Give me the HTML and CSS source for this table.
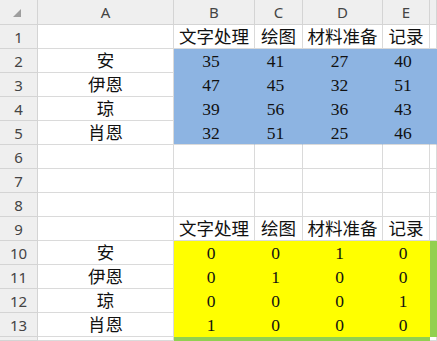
FILE: index.html
```html
<!DOCTYPE html>
<html>
<head>
<meta charset="utf-8">
<link rel="stylesheet" href="styles.css">
</head>
<body>
<div class="sheet">
  <div class="hd corner"><span class="tri"></span></div>
  <div class="hd col">A</div><div class="hd col">B</div><div class="hd col">C</div><div class="hd col">D</div><div class="hd col">E</div><div class="hd col"></div>

  <div class="hd row">1</div>
  <div class="c"></div><div class="c t">文字处理</div><div class="c t">绘图</div><div class="c t">材料准备</div><div class="c t">记录</div><div class="c"></div>

  <div class="hd row">2</div>
  <div class="c t">安</div><div class="c n blue">35</div><div class="c n blue">41</div><div class="c n blue">27</div><div class="c n blue">40</div><div class="c blue"></div>
  <div class="hd row">3</div>
  <div class="c t">伊恩</div><div class="c n blue">47</div><div class="c n blue">45</div><div class="c n blue">32</div><div class="c n blue">51</div><div class="c blue"></div>
  <div class="hd row">4</div>
  <div class="c t">琼</div><div class="c n blue">39</div><div class="c n blue">56</div><div class="c n blue">36</div><div class="c n blue">43</div><div class="c blue"></div>
  <div class="hd row">5</div>
  <div class="c t">肖恩</div><div class="c n blue last">32</div><div class="c n blue last">51</div><div class="c n blue last">25</div><div class="c n blue last">46</div><div class="c blue last"></div>

  <div class="hd row">6</div>
  <div class="c"></div><div class="c"></div><div class="c"></div><div class="c"></div><div class="c"></div><div class="c"></div>
  <div class="hd row">7</div>
  <div class="c"></div><div class="c"></div><div class="c"></div><div class="c"></div><div class="c"></div><div class="c"></div>
  <div class="hd row">8</div>
  <div class="c"></div><div class="c"></div><div class="c"></div><div class="c"></div><div class="c"></div><div class="c"></div>

  <div class="hd row">9</div>
  <div class="c"></div><div class="c t">文字处理</div><div class="c t">绘图</div><div class="c t">材料准备</div><div class="c t">记录</div><div class="c"></div>

  <div class="hd row">10</div>
  <div class="c t">安</div><div class="c n yel">0</div><div class="c n yel">0</div><div class="c n yel">1</div><div class="c n yel">0</div><div class="c green"></div>
  <div class="hd row">11</div>
  <div class="c t">伊恩</div><div class="c n yel">0</div><div class="c n yel">1</div><div class="c n yel">0</div><div class="c n yel">0</div><div class="c green"></div>
  <div class="hd row">12</div>
  <div class="c t">琼</div><div class="c n yel">0</div><div class="c n yel">0</div><div class="c n yel">0</div><div class="c n yel">1</div><div class="c green"></div>
  <div class="hd row">13</div>
  <div class="c t">肖恩</div><div class="c n yel">1</div><div class="c n yel">0</div><div class="c n yel">0</div><div class="c n yel">0</div><div class="c green"></div>

  <div class="hd row"></div>
  <div class="c"></div><div class="c green"></div><div class="c green"></div><div class="c green"></div><div class="c green"></div><div class="c"></div>
</div>
</body>
</html>
```

FILE: styles.css
```css
html, body {
  margin: 0;
  padding: 0;
  background: #ffffff;
  overflow: hidden;
}
.sheet {
  display: grid;
  grid-template-columns: 38px 136px 81px 48px 80px 47px minmax(0, 1fr);
  grid-template-rows: 25px repeat(13, 24px) 4px;
  width: 437px;
  height: 341px;
  overflow: hidden;
}
.sheet > div {
  box-sizing: border-box;
  border-right: 1px solid #dadada;
  border-bottom: 1px solid #dadada;
  overflow: hidden;
  white-space: nowrap;
}
.hd {
  background: #efefef;
  color: #444444;
  font-family: "Noto Sans", "Liberation Sans", sans-serif;
  font-size: 15px;
  display: flex;
  align-items: center;
  justify-content: center;
}
.sheet > .hd {
  border-color: #d4d4d4;
}
.corner {
  position: relative;
}
.tri {
  position: absolute;
  left: 13px;
  top: 9px;
  width: 0;
  height: 0;
  border-left: 8px solid transparent;
  border-bottom: 8px solid #9e9e9e;
}
.c {
  font-family: "Liberation Serif", "Noto Sans CJK SC", serif;
  font-size: 17.5px;
  color: #111111;
  display: flex;
  align-items: center;
  justify-content: center;
  line-height: 1;
  padding-top: 2px;
}
.n {
  padding-right: 6px;
  padding-top: 3px;
}
.sheet > .blue {
  background: #8db4e2;
  border-color: #8db4e2;
}
.sheet > .blue.last {
  border-bottom-color: #dadada;
}
.sheet > .yel {
  background: #ffff00;
  border-color: #ffff00;
}
.sheet > .green {
  background: #92d050;
  border-color: #92d050;
}
```
